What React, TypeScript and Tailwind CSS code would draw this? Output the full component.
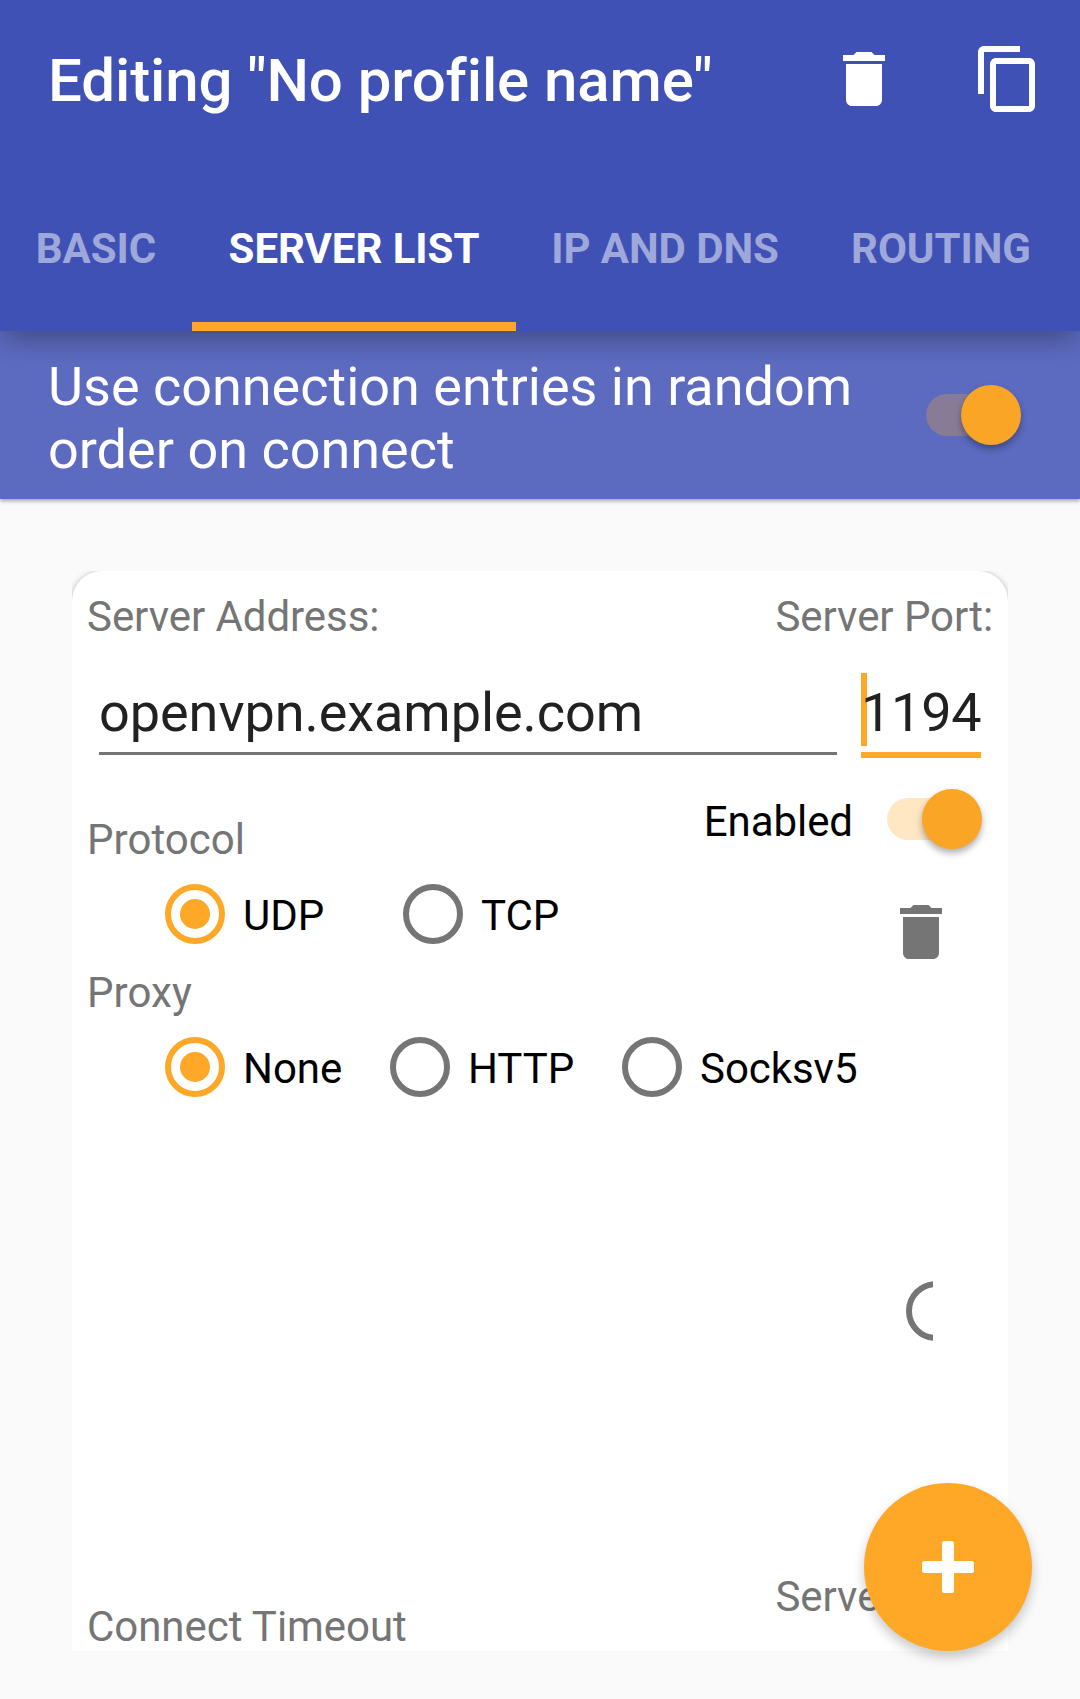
import React from "react";

function TrashIcon({ className }: { className: string }) {
  return (
    <svg viewBox="0 0 24 24" className={className} fill="currentColor">
      <path d="M6 19c0 1.1.9 2 2 2h8c1.1 0 2-.9 2-2V7H6v12zM19 4h-3.5l-1-1h-5l-1 1H5v2h14V4z" />
    </svg>
  );
}

function CopyIcon({ className }: { className: string }) {
  return (
    <svg viewBox="0 0 24 24" className={className} fill="currentColor">
      <path d="M16 1H4c-1.1 0-2 .9-2 2v14h2V3h12V1zm3 4H8c-1.1 0-2 .9-2 2v14c0 1.1.9 2 2 2h11c1.1 0 2-.9 2-2V7c0-1.1-.9-2-2-2zm0 16H8V7h11v14z" />
    </svg>
  );
}

function Toggle() {
  return (
    <div className="flex h-[60px] w-[96px] shrink-0 items-center">
      <div className="h-[42px] w-[84px] rounded-full bg-[#ffa726]/27" />
      <div className="-ml-[49px] size-[60px] shrink-0 rounded-full bg-[#faa526] shadow-[0_4px_7px_rgba(0,0,0,0.32)]" />
    </div>
  );
}

function Radio({ label, checked, className = "" }: { label: string; checked?: boolean; className?: string }) {
  return (
    <div className={`flex h-[60px] items-center ${className}`}>
      {checked ? (
        <div className="flex size-[60px] items-center justify-center rounded-full border-6 border-[#ffa726]">
          <div className="size-[30px] rounded-full bg-[#ffa726]" />
        </div>
      ) : (
        <div className="size-[60px] rounded-full border-6 border-[#757575]" />
      )}
      <span className="ml-[18px] pt-[3px] whitespace-nowrap text-black">{label}</span>
    </div>
  );
}

const tabs = [
  { label: "BASIC", width: "w-[192px]" },
  { label: "SERVER LIST", width: "w-[324px]", active: true },
  { label: "IP AND DNS", width: "w-[298px]" },
  { label: "ROUTING", width: "w-[254px]" },
];

export default function App() {
  return (
    <div className="relative h-[1699px] w-[1080px] overflow-hidden bg-[#fafafa] font-[Roboto,sans-serif] text-[42px] leading-[50px] tracking-[-0.05px] text-[#757575]">
      <header className="relative z-10 h-[331px] bg-[#3f51b5] text-white shadow-[0_12px_24px_-3px_rgba(0,0,0,0.29)]">
        <div className="flex h-[158px] items-center pr-[36px] pl-[48px]">
          <h1 className="grow pt-[4px] text-[60px] leading-[70px] font-medium tracking-[-0.09px] whitespace-nowrap">
            Editing "No profile name"
          </h1>
          <TrashIcon className="size-[72px]" />
          <CopyIcon className="ml-[72px] size-[72px]" />
        </div>
        <nav className="flex h-[173px]">
          {tabs.map((t) => (
            <div key={t.label} className={`flex shrink-0 flex-col ${t.width}`}>
              <div
                className={`flex grow items-center justify-center pt-[17px] font-bold whitespace-nowrap ${
                  t.active ? "text-white" : "text-[#9fa8da]"
                }`}
              >
                {t.label}
              </div>
              <div className={`h-[9px] ${t.active ? "bg-[#ffa726]" : ""}`} />
            </div>
          ))}
        </nav>
      </header>

      <section className="flex h-[168px] items-center justify-between bg-[#5c6bc0] pr-[58px] pl-[48px] text-white shadow-[0_2px_4px_rgba(0,0,0,0.35)]">
        <p className="w-[840px] pt-[6px] text-[54px] leading-[63px] tracking-normal">
          Use connection entries in random order on connect
        </p>
        <div className="pb-[1px]">
          <Toggle />
        </div>
      </section>

      <main className="mt-[72px] ml-[72px] h-[1080px] w-[936px] overflow-hidden">
        <div className="h-[1120px] rounded-[30px] bg-white px-[15px] pt-[21px] shadow-[0_1px_6px_rgba(0,0,0,0.3)]">
          <div className="flex justify-between">
            <span>Server Address:</span>
            <span>Server Port:</span>
          </div>

          <div className="mt-[31px] flex items-start justify-between px-[12px] text-[54px] text-[#212121]">
            <div className="flex h-[82px] w-[738px] items-center border-b-3 border-[#757575]">
              openvpn.example.com
            </div>
            <div className="flex h-[85px] w-[120px] items-center border-b-6 border-[#ffa726]">
              <div className="h-[73px] w-[6px] shrink-0 self-start bg-[#ffa726]" />
              <span className="-ml-[6px] tracking-[-0.25px]">1194</span>
            </div>
          </div>

          <div className="flex h-[210px] justify-between">
            <div className="pt-[57px]">
              <div className="tracking-[0.05px]">Protocol</div>
              <div className="mt-[19px] flex pl-[78px]">
                <Radio label="UDP" checked className="w-[238px]" />
                <Radio label="TCP" />
              </div>
            </div>
            <div className="flex flex-col items-end pt-[31px] pr-[10px]">
              <div className="flex items-center">
                <span className="mr-[34px] pt-[6px] text-black">Enabled</span>
                <Toggle />
              </div>
              <TrashIcon className="mt-[47px] mr-[26px] size-[72px]" />
            </div>
          </div>

          <div className="tracking-[0.05px]">Proxy</div>
          <div className="mt-[19px] flex pl-[78px]">
            <Radio label="None" checked className="w-[225px]" />
            <Radio label="HTTP" className="w-[232px]" />
            <Radio label="Socksv5" />
          </div>

          {/* Radio button cut off by its narrow column */}
          <div className="mt-[184px] ml-[819px] w-[27px] overflow-hidden">
            <div className="size-[60px] rounded-full border-6 border-[#757575]" />
          </div>

          <div className="mt-[231px] flex justify-between">
            <span className="pt-[30px]">Connect Timeout</span>
            <span>Server Port:</span>
          </div>
        </div>
      </main>

      <button className="absolute top-[1483px] left-[864px] z-20 flex size-[168px] items-center justify-center rounded-full bg-[#ffa726] shadow-[0_6px_12px_rgba(0,0,0,0.22)]">
        <svg viewBox="0 0 52 52" className="size-[52px]" fill="white">
          <rect x="20" y="0" width="12" height="52" rx="2.5" />
          <rect x="0" y="20" width="52" height="12" rx="2.5" />
        </svg>
      </button>
    </div>
  );
}
